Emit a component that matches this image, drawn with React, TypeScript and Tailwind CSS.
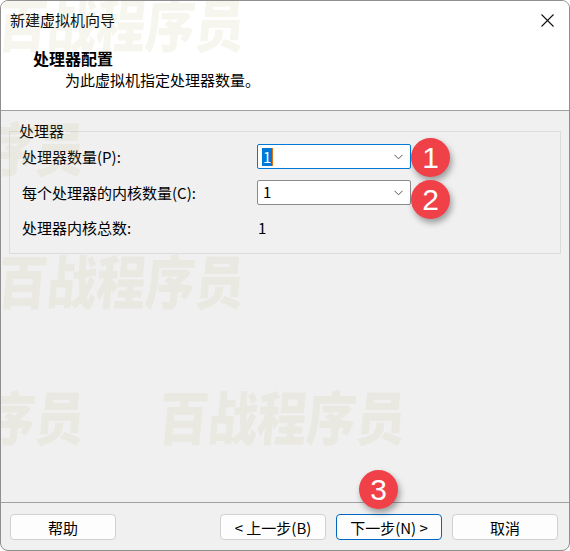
import React from 'react';

const Badge: React.FC<{ n: string; className: string }> = ({ n, className }) => (
    <div
        className={`absolute w-[39px] h-[39px] rounded-full bg-[#ef4147] text-white flex items-center justify-center font-['Liberation_Sans',sans-serif] text-[30px] leading-none shadow-[2px_4px_6px_rgba(0,0,0,0.35)] ${className}`}
    >
        {n}
    </div>
);

const Combo: React.FC<{ value: string; focused?: boolean }> = ({ value, focused }) => (
    <div
        className={`w-[154px] h-[25px] bg-white rounded-[2px] border flex items-center pl-[4px] pr-[7px] ${
            focused ? 'border-[#0078d7]' : 'border-[#8a8a8a]'
        }`}
    >
        {focused ? (
            <span className="bg-[#0078d7] text-white px-[1px] leading-[18px] border-r border-[#e07010]">{value}</span>
        ) : (
            <span className="px-[1px]">{value}</span>
        )}
        <svg className="ml-auto" width="9" height="6" viewBox="0 0 9 6" fill="none">
            <path d="M0.5 0.8 L4.5 4.8 L8.5 0.8" stroke="#555" strokeWidth="1" />
        </svg>
    </div>
);

const WizardButton: React.FC<{ label: string; primary?: boolean }> = ({ label, primary }) => (
    <button
        className={`w-[106px] h-[26px] bg-[#fdfdfd] rounded-[4px] border text-[15px] leading-none text-black ${
            primary ? 'border-[#0067c0]' : 'border-[#d0d0d0]'
        }`}
    >
        {label}
    </button>
);

const Watermark: React.FC<{ left: number; top: number }> = ({ left, top }) => (
    <span
        className="absolute whitespace-nowrap text-[58px] leading-none font-black text-[rgba(195,195,140,0.15)] origin-top-left scale-x-85 -skew-x-6"
        style={{ left, top }}
    >
        百战程序员
    </span>
);

export default function App() {
    return (
        <div className="w-[570px] h-[551px] relative overflow-hidden rounded-[8px] border border-[#8f8f8f] bg-[#f0f0f0] flex flex-col text-black font-['Noto_Sans_CJK_SC',sans-serif] text-[15px]">
            {/* Header */}
            <div className="bg-white h-[110px] border-b border-[#a0a0a0] flex flex-col">
                <div className="h-[38px] flex items-center pl-[9px] pr-[15px]">
                    <span className="leading-[20px]">新建虚拟机向导</span>
                    <svg className="ml-auto" width="13" height="13" viewBox="0 0 13 13">
                        <path d="M0.5 0.5 L12.5 12.5 M12.5 0.5 L0.5 12.5" stroke="#111" strokeWidth="1.1" />
                    </svg>
                </div>
                <div className="pl-[32px] pt-[9px] text-[16px] font-bold leading-[20px]">处理器配置</div>
                <div className="pl-[64px] pt-[2px] leading-[20px]">为此虚拟机指定处理器数量。</div>
            </div>

            {/* Body */}
            <div className="flex-1 flex flex-col px-[8px] pt-[10px]">
                <fieldset className="border border-[#dcdcdc] pl-[12px] pb-[15px]">
                    <legend className="-ml-[4px] px-[1px] leading-[20px]">处理器</legend>
                    <div className="grid grid-cols-[235px_1fr] items-center mt-[3px] gap-y-[11px]">
                        <span className="leading-[20px]">处理器数量(P):</span>
                        <Combo value="1" focused />
                        <span className="leading-[20px]">每个处理器的内核数量(C):</span>
                        <Combo value="1" />
                        <span className="leading-[20px] mt-[2px]">处理器内核总数:</span>
                        <span className="leading-[20px] mt-[2px] pl-[1px]">1</span>
                    </div>
                </fieldset>
            </div>

            {/* Footer */}
            <div className="border-t border-[#a0a0a0] pt-[11px] pb-[10px] pl-[9px] pr-[11px] flex">
                <WizardButton label="帮助" />
                <div className="ml-auto flex gap-[10px]">
                    <WizardButton label="< 上一步(B)" />
                    <WizardButton label="下一步(N) >" primary />
                    <WizardButton label="取消" />
                </div>
            </div>

            {/* Watermark overlay */}
            <div className="absolute inset-0 pointer-events-none">
                <Watermark left={0} top={-8} />
                <Watermark left={-160} top={116} />
                <Watermark left={0} top={249} />
                <Watermark left={-160} top={385} />
                <Watermark left={161} top={385} />
            </div>

            <Badge n="1" className="left-[410px] top-[137px]" />
            <Badge n="2" className="left-[410px] top-[179px]" />
            <Badge n="3" className="left-[358px] top-[469px]" />
        </div>
    );
}
